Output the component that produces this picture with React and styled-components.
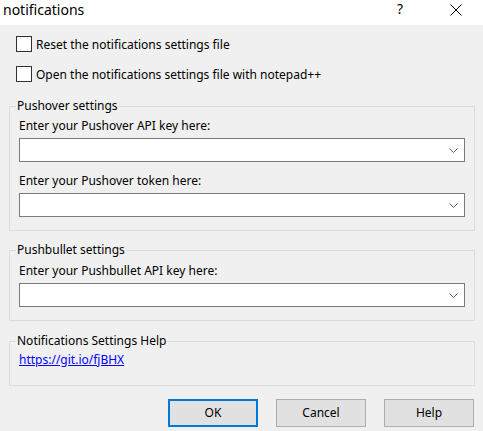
import React from "react";
import styled, { createGlobalStyle } from "styled-components";

const GlobalStyle = createGlobalStyle`
  html, body {
    margin: 0;
    padding: 0;
    width: 483px;
    height: 431px;
    overflow: hidden;
    background: #f0f0f0;
  }
  body {
    font-family: "Noto Sans", "Open Sans", sans-serif;
    font-size: 12px;
    color: #000;
  }
`;

const Dialog = styled.div`
  width: 483px;
  height: 431px;
  display: flex;
  flex-direction: column;
  background: #f0f0f0;
`;

const TitleBar = styled.div`
  height: 25px;
  flex: none;
  background: #fff;
  display: flex;
  align-items: flex-start;
  padding: 0 21px 0 3px;
`;

const Title = styled.div`
  flex: 1;
  font-size: 14px;
  line-height: 19px;
`;

const HelpGlyph = styled.div`
  font-size: 14px;
  line-height: 19px;
  margin-right: 47px;
  margin-top: -1px;
`;

const CloseIcon = styled.svg`
  margin-top: 4px;
  display: block;
`;

const Content = styled.div`
  padding: 0 8px 0 9px;
  display: flex;
  flex-direction: column;
`;

const CheckRow = styled.label`
  display: flex;
  align-items: center;
  height: 16px;
  margin: ${(p) => (p.$first ? "11px" : "14px")} 0 0 7px;
`;

const CheckBox = styled.span`
  width: 16px;
  height: 16px;
  box-sizing: border-box;
  border: 1px solid #333;
  background: #fff;
  flex: none;
`;

const CheckText = styled.span`
  margin-left: 4px;
  line-height: 16px;
  padding-top: 2px;
  white-space: nowrap;
`;

const Group = styled.fieldset`
  margin: ${(p) => p.$top}px 0 0 0;
  padding: 0;
  border: 1px solid #dcdcdc;
  width: 466px;
  box-sizing: border-box;
  min-width: 0;
`;

const Legend = styled.legend`
  margin-left: 6px;
  padding: 0 1px;
  line-height: 16px;
  font-size: 12px;
`;

const GroupBody = styled.div`
  padding: ${(p) => p.$pt}px 9px ${(p) => p.$pb}px 9px;
  display: flex;
  flex-direction: column;
`;

const FieldLabel = styled.div`
  line-height: 15px;
  margin: ${(p) => (p.$spaced ? "11px" : "0")} 0 5px 0;
`;

const Combo = styled.div`
  height: 24px;
  box-sizing: border-box;
  border: 1px solid #7a7a7a;
  background: #fff;
  display: flex;
  align-items: center;
  justify-content: flex-end;
  padding-right: 5px;
`;

const Chevron = styled.svg`
  display: block;
  margin-top: 1px;
`;

const HelpLink = styled.a`
  color: #0000ff;
  text-decoration: underline;
  line-height: 15px;
  align-self: flex-start;
`;

const ButtonRow = styled.div`
  display: flex;
  justify-content: flex-end;
  gap: 18px;
  margin-top: 13px;
  padding-right: 1px;
`;

const Button = styled.button`
  width: 90px;
  height: 28px;
  box-sizing: border-box;
  background: #e1e1e1;
  border: ${(p) => (p.$default ? "2px solid #0078d7" : "1px solid #adadad")};
  font-family: "Noto Sans", "Open Sans", sans-serif;
  font-size: 12px;
  color: #000;
  padding: 0;
  line-height: 16px;
`;

function ComboBox() {
  return (
    <Combo>
      <Chevron width="10" height="6" viewBox="0 0 10 6">
        <polyline points="0.5,0.5 4.5,4.5 8.5,0.5" fill="none" stroke="#606060" strokeWidth="1" />
      </Chevron>
    </Combo>
  );
}

export default function App() {
  return (
    <Dialog>
      <GlobalStyle />
      <TitleBar>
        <Title>notifications</Title>
        <HelpGlyph>?</HelpGlyph>
        <CloseIcon width="12" height="12" viewBox="0 0 12 12">
          <path d="M0.5 0.5 L11.5 11.5 M11.5 0.5 L0.5 11.5" stroke="#000" strokeWidth="1" fill="none" />
        </CloseIcon>
      </TitleBar>
      <Content>
        <CheckRow $first>
          <CheckBox />
          <CheckText>Reset the notifications settings file</CheckText>
        </CheckRow>
        <CheckRow>
          <CheckBox />
          <CheckText>Open the notifications settings file with notepad++</CheckText>
        </CheckRow>

        <Group $top={16}>
          <Legend>Pushover settings</Legend>
          <GroupBody $pt={4} $pb={13}>
            <FieldLabel>Enter your Pushover API key here:</FieldLabel>
            <ComboBox />
            <FieldLabel $spaced>Enter your Pushover token here:</FieldLabel>
            <ComboBox />
          </GroupBody>
        </Group>

        <Group $top={11}>
          <Legend>Pushbullet settings</Legend>
          <GroupBody $pt={5} $pb={13}>
            <FieldLabel>Enter your Pushbullet API key here:</FieldLabel>
            <ComboBox />
          </GroupBody>
        </Group>

        <Group $top={12}>
          <Legend>Notifications Settings Help</Legend>
          <GroupBody $pt={3} $pb={18}>
            <HelpLink href="#">https://git.io/fjBHX</HelpLink>
          </GroupBody>
        </Group>

        <ButtonRow>
          <Button $default>OK</Button>
          <Button>Cancel</Button>
          <Button>Help</Button>
        </ButtonRow>
      </Content>
    </Dialog>
  );
}
